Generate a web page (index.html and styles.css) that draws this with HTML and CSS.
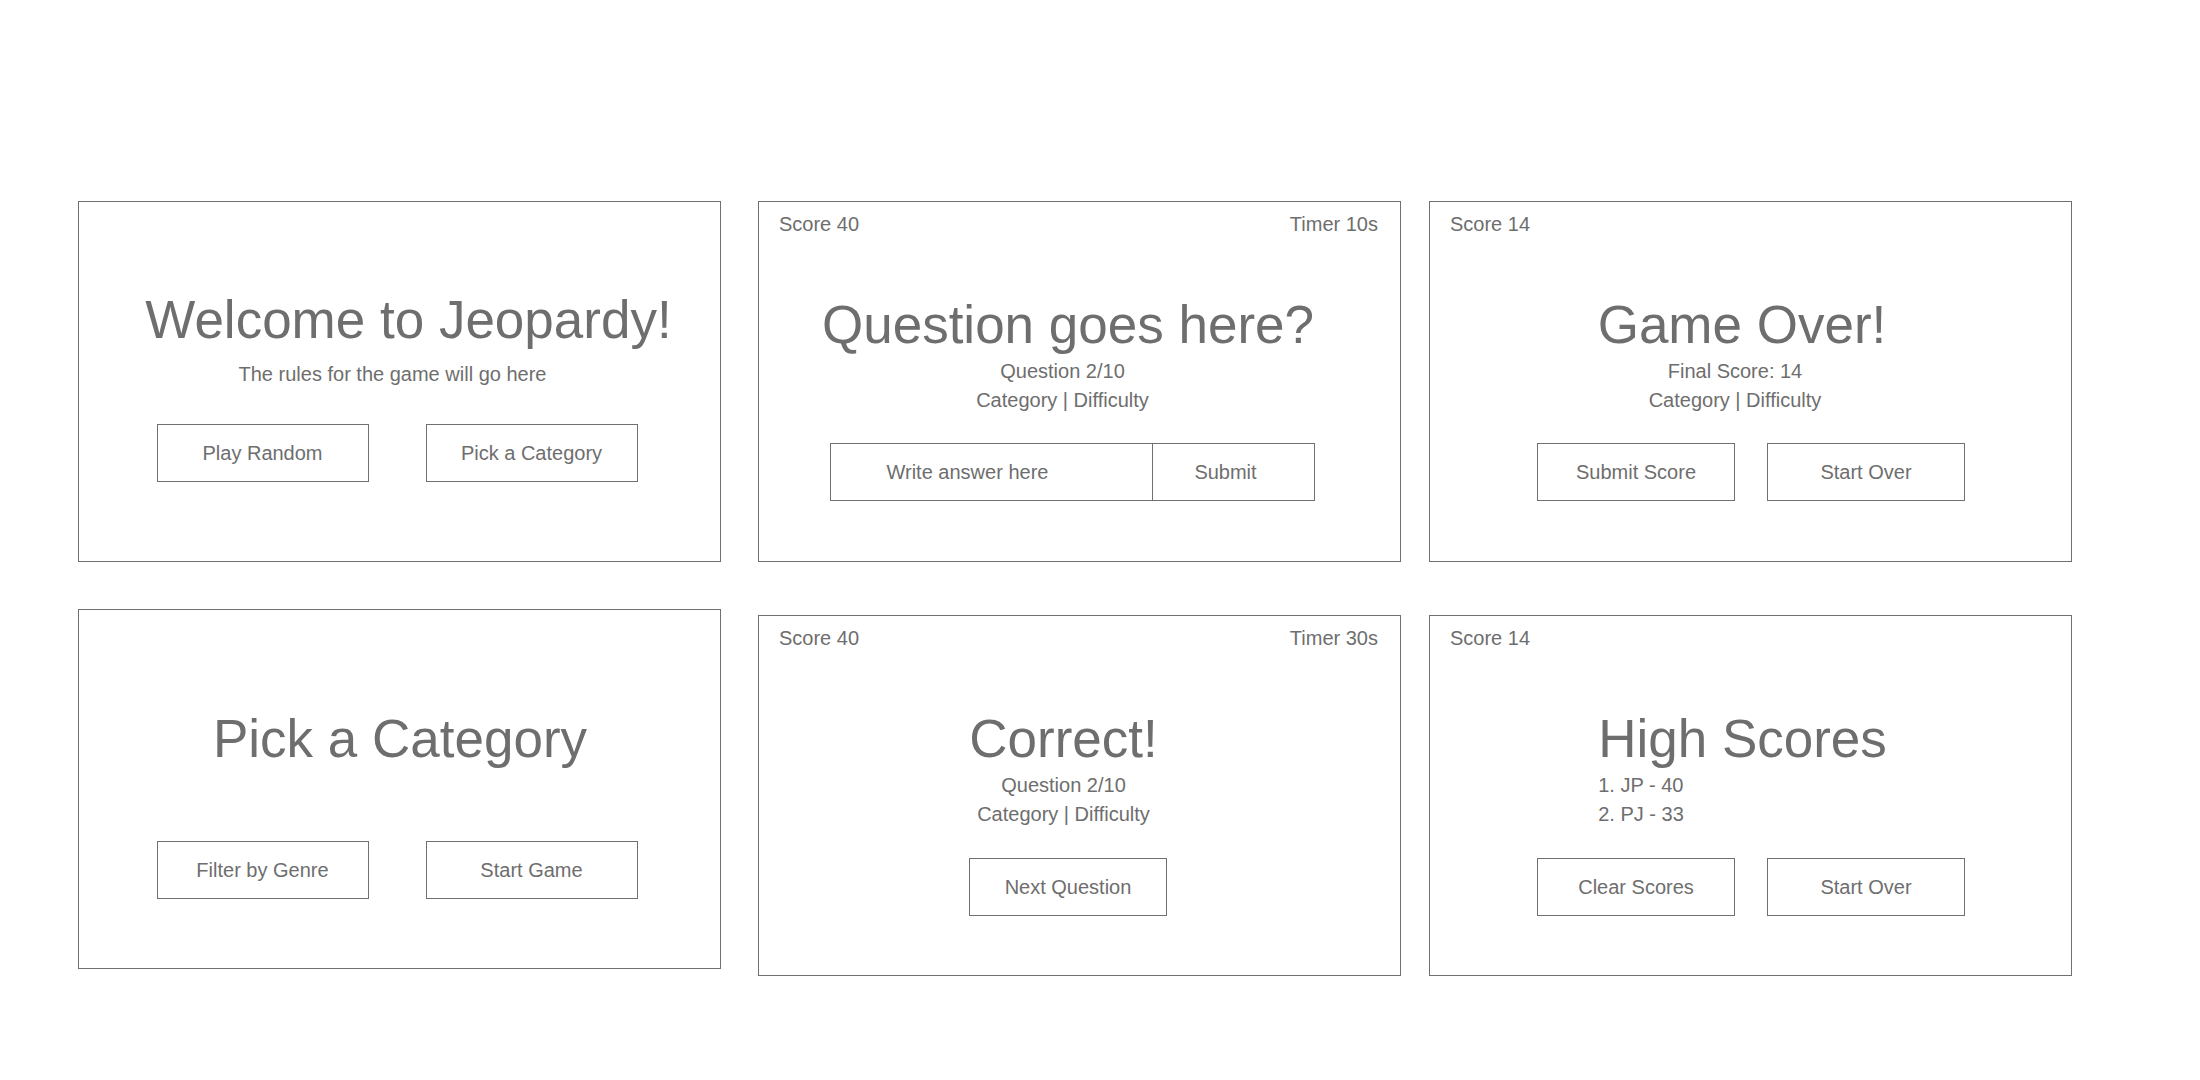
FILE: index.html
```html
<!DOCTYPE html>
<html lang="en">
<head>
<meta charset="utf-8">
<title>Jeopardy wireframes</title>
<link rel="stylesheet" href="styles.css">
</head>
<body>
<main class="board">
  <section class="card card--welcome">
    <div class="card__body">
      <h1 class="title">Welcome to Jeopardy!</h1>
      <p class="line">The rules for the game will go here</p>
      <div class="actions actions--wide">
        <button class="btn btn--wide">Play Random</button>
        <button class="btn btn--wide">Pick a Category</button>
      </div>
    </div>
  </section>

  <section class="card card--question">
    <header class="card__head"><span>Score 40</span><span>Timer 10s</span></header>
    <div class="card__body">
      <h1 class="title">Question goes here?</h1>
      <p class="line line--first">Question 2/10</p>
      <p class="line">Category | Difficulty</p>
      <div class="answer">
        <div class="answer__field">Write answer here</div>
        <button class="answer__submit">Submit</button>
      </div>
    </div>
  </section>

  <section class="card card--over">
    <header class="card__head"><span>Score 14</span></header>
    <div class="card__body">
      <h1 class="title">Game Over!</h1>
      <p class="line line--first">Final Score: 14</p>
      <p class="line">Category | Difficulty</p>
      <div class="actions actions--std">
        <button class="btn btn--std">Submit Score</button>
        <button class="btn btn--std">Start Over</button>
      </div>
    </div>
  </section>

  <section class="card card--pick">
    <div class="card__body">
      <h1 class="title">Pick a Category</h1>
      <div class="actions actions--wide">
        <button class="btn btn--wide">Filter by Genre</button>
        <button class="btn btn--wide">Start Game</button>
      </div>
    </div>
  </section>

  <section class="card card--correct">
    <header class="card__head"><span>Score 40</span><span>Timer 30s</span></header>
    <div class="card__body">
      <h1 class="title">Correct!</h1>
      <p class="line line--first">Question 2/10</p>
      <p class="line">Category | Difficulty</p>
      <div class="actions actions--std">
        <button class="btn btn--std">Next Question</button>
      </div>
    </div>
  </section>

  <section class="card card--scores">
    <header class="card__head"><span>Score 14</span></header>
    <div class="card__body">
      <div class="stack">
        <h1 class="title">High Scores</h1>
        <p class="line line--first">1. JP - 40</p>
        <p class="line">2. PJ - 33</p>
      </div>
      <div class="actions actions--std">
        <button class="btn btn--std">Clear Scores</button>
        <button class="btn btn--std">Start Over</button>
      </div>
    </div>
  </section>
</main>
</body>
</html>
```

FILE: styles.css
```css
* {
  box-sizing: border-box;
}

body {
  margin: 0;
  background: #ffffff;
  color: #6e6e6e;
  font-family: "Liberation Sans", Arial, sans-serif;
}

.board {
  display: grid;
  grid-template-columns: 680px 671px 643px;
  row-gap: 47px;
  align-items: start;
  padding: 201px 0 0 78px;
}

.card {
  width: 643px;
  height: 361px;
  border: 1px solid #707070;
  display: flex;
  flex-direction: column;
}

.card__head {
  display: flex;
  justify-content: space-between;
  padding: 10px 22px 0 20px;
  font-size: 20px;
  line-height: 24px;
}

.card__body {
  display: flex;
  flex-direction: column;
  align-items: center;
}

.title {
  margin: 0;
  font-size: 53px;
  font-weight: 400;
  line-height: 60px;
  white-space: nowrap;
}

.line {
  margin: 0;
  font-size: 20px;
  line-height: 29px;
  white-space: nowrap;
}

.line--first {
  margin-top: 2px;
}

.actions {
  display: flex;
}

.actions--wide {
  gap: 57px;
}

.actions--std {
  gap: 32px;
  margin-top: 28px;
}

.btn {
  height: 58px;
  padding: 0;
  border: 1px solid #707070;
  background: #ffffff;
  color: inherit;
  font-family: inherit;
  font-size: 20px;
}

.btn--wide {
  width: 212px;
}

.btn--std {
  width: 198px;
}

/* answer field with attached submit */
.answer {
  display: flex;
  height: 58px;
  margin-top: 28px;
  margin-left: 19px;
  border: 1px solid #707070;
}

.answer__field {
  width: 322px;
  padding-left: 56px;
  border-right: 1px solid #707070;
  font-size: 20px;
  line-height: 56px;
}

.answer__submit {
  width: 161px;
  padding: 0 15px 0 0;
  border: 0;
  background: #ffffff;
  color: inherit;
  font-family: inherit;
  font-size: 20px;
}

/* welcome */
.card--welcome .card__body {
  padding: 88px 5px 0 0;
}

.card--welcome .title {
  margin-left: 23px;
}

.card--welcome .line {
  margin: 10px 9px 0 0;
}

.card--welcome .actions {
  margin-top: 35px;
}

/* question */
.card--question .card__body {
  padding: 59px 34px 0 0;
}

.card--question .title {
  margin-left: 11px;
}

/* game over */
.card--over .card__body {
  padding: 59px 31px 0 0;
}

.card--over .title {
  margin-left: 14px;
}

.card--over .actions {
  margin-left: 32px;
}

/* pick category */
.card--pick {
  height: 360px;
}

.card--pick .card__body {
  padding: 99px 5px 0 0;
}

.card--pick .title {
  margin-left: 6px;
}

.card--pick .actions {
  margin-top: 72px;
}

/* correct */
.card--correct {
  margin-top: 6px;
}

.card--correct .card__body {
  padding: 59px 32px 0 0;
}

.card--correct .actions {
  margin-top: 29px;
  margin-left: 9px;
}

/* high scores */
.card--scores {
  margin-top: 6px;
}

.card--scores .card__body {
  padding: 59px 16px 0 0;
}

.stack {
  display: flex;
  flex-direction: column;
  align-items: flex-start;
}

.card--scores .actions {
  margin-top: 29px;
  margin-left: 17px;
}
```
